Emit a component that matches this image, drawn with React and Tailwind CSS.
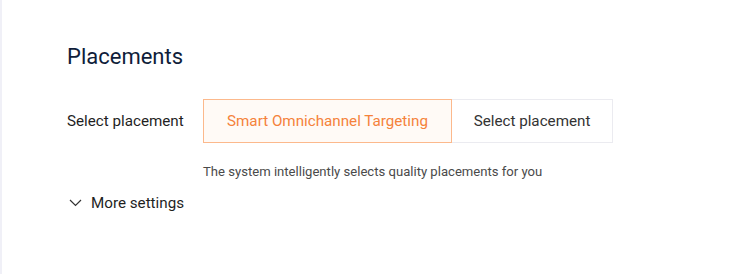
import React from 'react';

export default function App() {
  return (
    <div className="w-[751px] h-[274px] bg-white border-l-2 border-[#f0f0f7] font-['Roboto',sans-serif]">
      <div className="pl-[65px] pt-[42px]">
        {/* Title */}
        <h2 className="text-[22px] leading-[30px] text-[#0f1d3a]">Placements</h2>

        {/* Placement selector */}
        <div className="flex items-center mt-[27px]">
          <span className="w-[136px] text-[15.2px] text-[#1f1f1f]">Select placement</span>
          <div className="flex h-[44px]">
            <button className="w-[249px] h-full border border-[#fcb98c] bg-[#fffaf6] text-[15.2px] text-[#f5823b]">
              Smart Omnichannel Targeting
            </button>
            <button className="w-[161px] h-full border border-l-0 border-[#ebebf0] bg-white text-[15.2px] text-[#333]">
              Select placement
            </button>
          </div>
        </div>

        <p className="ml-[136px] mt-[20px] text-[13.1px] leading-[18px] text-[#4a4a4a]">
          The system intelligently selects quality placements for you
        </p>

        {/* More settings */}
        <div className="flex items-center gap-[9px] mt-[11px] ml-[2px] text-[15.2px] text-[#1f1f1f]">
          <svg width="13" height="8" viewBox="0 0 13 8" fill="none" stroke="#333" strokeWidth="1.2">
            <path d="M1 1l5.5 5.5L12 1" />
          </svg>
          <span>More settings</span>
        </div>
      </div>
    </div>
  );
}
